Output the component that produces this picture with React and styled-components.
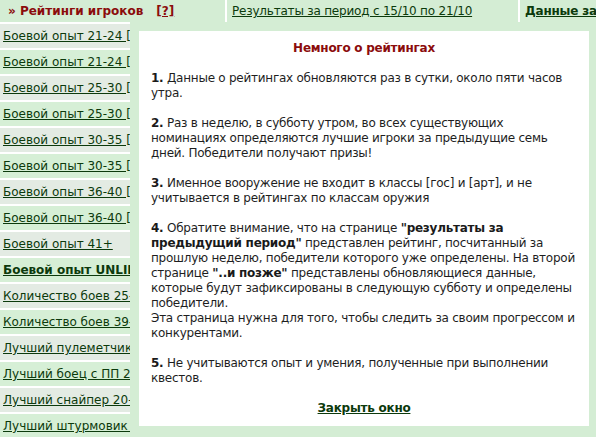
import React from "react";
import styled, { createGlobalStyle } from "styled-components";

const GlobalStyle = createGlobalStyle`
  html, body {
    margin: 0;
    padding: 0;
    background: #d4edd4;
  }
  body {
    font-family: "DejaVu Sans", Verdana, sans-serif;
    font-size: 12px;
    color: #1e1e1e;
  }
`;

const categories = [
  { title: "Боевой опыт 21-24 [гос]" },
  { title: "Боевой опыт 21-24 [арт]" },
  { title: "Боевой опыт 25-30 [гос]" },
  { title: "Боевой опыт 25-30 [арт]" },
  { title: "Боевой опыт 30-35 [гос]" },
  { title: "Боевой опыт 30-35 [арт]" },
  { title: "Боевой опыт 36-40 [гос]" },
  { title: "Боевой опыт 36-40 [арт]" },
  { title: "Боевой опыт 41+" },
  { title: "Боевой опыт UNLIMITED", active: true },
  { title: "Количество боев 25-38" },
  { title: "Количество боев 39-50" },
  { title: "Лучший пулеметчик 20-50" },
  { title: "Лучший боец с ПП 20-50" },
  { title: "Лучший снайпер 20-50" },
  { title: "Лучший штурмовик 20-50" },
];

function App() {
  return (
    <Page>
      <GlobalStyle />
      <TopBar>
        <TabCell width="227px">
          <PageTitle>» Рейтинги игроков</PageTitle>
          <HelpLink href="#">[?]</HelpLink>
        </TabCell>
        <TabCell width="293px">
          <NavLink href="#" tight>
            Результаты за период с 15/10 по 21/10
          </NavLink>
        </TabCell>
        <TabCell>
          <NavLink href="#" bold tight>
            Данные за текущий период
          </NavLink>
        </TabCell>
      </TopBar>

      <Main>
        <Sidebar>
          {categories.map((c, i) => (
            <SideRow key={c.title} odd={i % 2 === 0}>
              <NavLink href="#" bold={c.active}>
                {c.title}
              </NavLink>
            </SideRow>
          ))}
        </Sidebar>
        <Board />
      </Main>

      <Popup>
        <PopupTitle>Немного о рейтингах</PopupTitle>
        <Note>
          <b>1.</b> Данные о рейтингах обновляются раз в сутки, около пяти часов
          утра.
        </Note>
        <Note>
          <b>2.</b> Раз в неделю, в субботу утром, во всех существующих
          номинациях определяются лучшие игроки за предыдущие семь дней.
          Победители получают призы!
        </Note>
        <Note>
          <b>3.</b> Именное вооружение не входит в классы [гос] и [арт], и не
          учитывается в рейтингах по классам оружия
        </Note>
        <Note>
          <b>4.</b> Обратите внимание, что на странице{" "}
          <b>"результаты за предыдущий период"</b> представлен рейтинг,
          посчитанный за прошлую неделю, победители которого уже определены. На
          второй странице <b>"..и позже"</b> представлены обновляющиеся данные,
          которые будут зафиксированы в следующую субботу и определены
          победители.
          <br />
          Эта страница нужна для того, чтобы следить за своим прогрессом и
          конкурентами.
        </Note>
        <Note>
          <b>5.</b> Не учитываются опыт и умения, полученные при выполнении
          квестов.
        </Note>
        <CloseRow>
          <NavLink href="#" bold>
            Закрыть окно
          </NavLink>
        </CloseRow>
      </Popup>
    </Page>
  );
}

const Page = styled.div`
  position: relative;
  width: 596px;
  height: 437px;
  overflow: hidden;
`;

const TopBar = styled.div`
  display: flex;
  height: 22px;
  align-items: stretch;
  white-space: nowrap;
`;

const TabCell = styled.div`
  display: flex;
  align-items: center;
  flex: ${(p) => (p.width ? `0 0 ${p.width}` : "1 0 auto")};
  padding-left: 5px;
  box-sizing: border-box;
  border-right: 2px solid #ffffff;
  &:first-child {
    padding-left: 8px;
  }
  &:last-child {
    border-right: none;
  }
`;

const PageTitle = styled.span`
  font-weight: bold;
  color: #8b0c0c;
`;

const HelpLink = styled.a`
  margin-left: 13px;
  font-weight: bold;
  color: #8b0c0c;
  text-decoration: underline;
`;

const NavLink = styled.a`
  color: #0c3a0c;
  text-decoration: underline;
  font-weight: ${(p) => (p.bold ? "bold" : "normal")};
  letter-spacing: ${(p) => (p.tight ? "-0.2px" : "inherit")};
  white-space: nowrap;
`;

const Main = styled.div`
  display: flex;
`;

const Sidebar = styled.div`
  flex: 0 0 130px;
  display: flex;
  flex-direction: column;
  overflow: hidden;
`;

const SideRow = styled.div`
  display: flex;
  align-items: center;
  height: 24px;
  padding-left: 3px;
  border-top: 2px solid #ffffff;
  background: ${(p) => (p.odd ? "#e3ebe3" : "#d6efd6")};
  overflow: hidden;
`;

const Board = styled.div`
  flex: 1;
`;

const Popup = styled.div`
  position: absolute;
  left: 139px;
  top: 31px;
  width: 450px;
  box-sizing: border-box;
  padding: 10px 10px 10px 12px;
  background: #ffffff;
  line-height: 15px;
  letter-spacing: -0.25px;
`;

const PopupTitle = styled.div`
  text-align: center;
  font-weight: bold;
  color: #8b0c0c;
  margin-bottom: 15px;
  padding-right: 2px;
`;

const Note = styled.p`
  margin: 0 0 15px;
  b {
    color: #1a1a1a;
  }
`;

const CloseRow = styled.div`
  text-align: center;
  padding-right: 2px;
`;

export default App;
